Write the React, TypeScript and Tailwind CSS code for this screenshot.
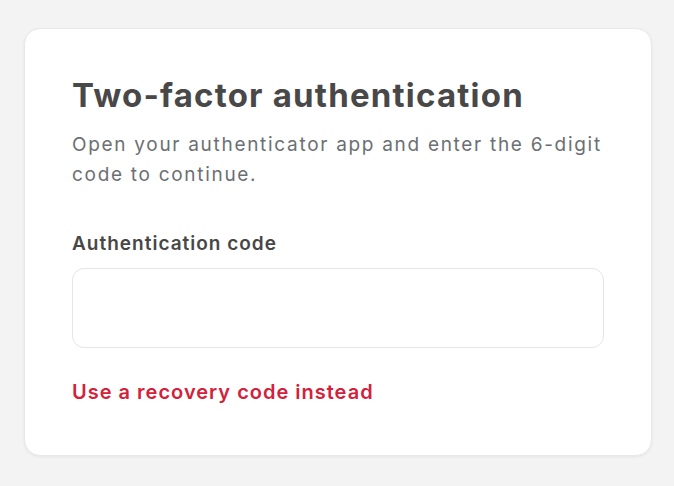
export default function App() {
  return (
    <div
      className="min-h-screen bg-[#f3f3f3] pt-[28px] px-[24px]"
      style={{ fontFamily: "Inter, 'Open Sans', sans-serif" }}
    >
      {/* Card */}
      <div className="w-[628px] bg-white rounded-[16px] border border-[#e8e8e8] shadow-[0_1px_3px_rgba(0,0,0,0.06)] px-[47px] pt-[46px] pb-[51px]">
        <h1 className="text-[33px] leading-[40px] font-bold text-[#484848] tracking-[1.2px]">
          Two-factor authentication
        </h1>
        <p className="mt-[15px] text-[19px] leading-[30px] text-[#6c6f73] tracking-[1.7px]">
          Open your authenticator app and enter the 6-digit code to continue.
        </p>

        <label className="block mt-[42px] text-[19px] leading-[24px] font-semibold text-[#474747] tracking-[1px]">
          Authentication code
        </label>
        <input
          type="text"
          className="mt-[12px] block w-full h-[80px] rounded-[12px] border border-[#e5e5e5] bg-white px-4 outline-none"
        />

        <a href="#" className="block mt-[32px] text-[20px] leading-[24px] font-semibold text-[#d3213b] tracking-[1px]">
          Use a recovery code instead
        </a>
      </div>
    </div>
  );
}
